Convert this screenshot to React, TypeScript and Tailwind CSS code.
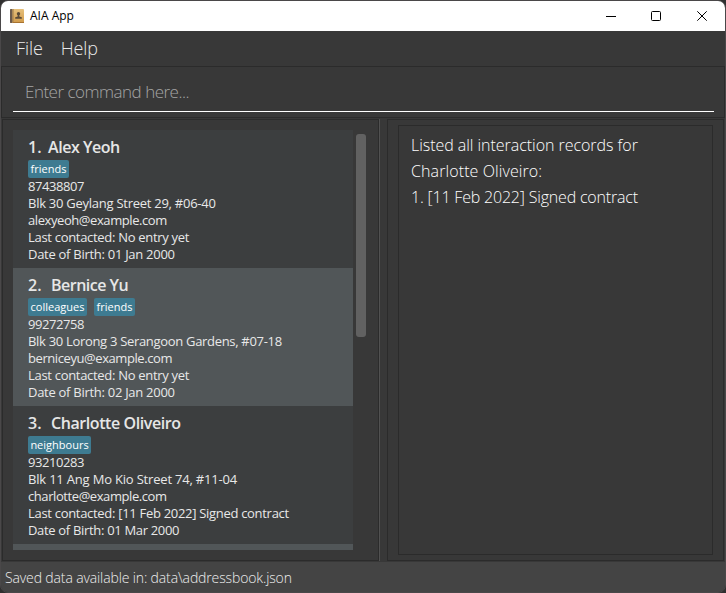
import React from "react";

type Line = { text: string; fit: string };
type Person = { index: string; indexFit: string; name: string; fit: string; tags: Line[]; lines: Line[] };

const people: Person[] = [
  {
    index: "1.",
    indexFit: "w-5",
    name: "Alex Yeoh",
    fit: "tracking-[-0.45px]",
    tags: [{ text: "friends", fit: "w-[41px]" }],
    lines: [
      { text: "87438807", fit: "tracking-[-0.45px]" },
      { text: "Blk 30 Geylang Street 29, #06-40", fit: "tracking-[-0.26px]" },
      { text: "alexyeoh@example.com", fit: "tracking-[-0.42px]" },
      { text: "Last contacted: No entry yet", fit: "tracking-[-0.3px]" },
      { text: "Date of Birth: 01 Jan 2000", fit: "tracking-[-0.28px]" },
    ],
  },
  {
    index: "2.",
    indexFit: "w-[23px]",
    name: "Bernice Yu",
    fit: "tracking-[-0.5px]",
    tags: [
      { text: "colleagues", fit: "w-[59px]" },
      { text: "friends", fit: "w-[41px]" },
    ],
    lines: [
      { text: "99272758", fit: "tracking-[-0.45px]" },
      { text: "Blk 30 Lorong 3 Serangoon Gardens, #07-18", fit: "tracking-[-0.31px]" },
      { text: "berniceyu@example.com", fit: "tracking-[-0.42px]" },
      { text: "Last contacted: No entry yet", fit: "tracking-[-0.3px]" },
      { text: "Date of Birth: 02 Jan 2000", fit: "tracking-[-0.28px]" },
    ],
  },
  {
    index: "3.",
    indexFit: "w-[23px]",
    name: "Charlotte Oliveiro",
    fit: "tracking-[-0.42px]",
    tags: [{ text: "neighbours", fit: "w-[63px]" }],
    lines: [
      { text: "93210283", fit: "tracking-[-0.45px]" },
      { text: "Blk 11 Ang Mo Kio Street 74, #11-04", fit: "tracking-[-0.19px]" },
      { text: "charlotte@example.com", fit: "tracking-[-0.42px]" },
      { text: "Last contacted: [11 Feb 2022] Signed contract", fit: "tracking-[-0.3px]" },
      { text: "Date of Birth: 01 Mar 2000", fit: "tracking-[-0.32px]" },
    ],
  },
];

function BookIcon() {
  return (
    <svg width="14" height="14" viewBox="0 0 14 14" className="shrink-0">
      <defs>
        <linearGradient id="cover" x1="0" y1="0" x2="0" y2="1">
          <stop offset="0" stopColor="#e6c07c" />
          <stop offset="1" stopColor="#d09a4a" />
        </linearGradient>
      </defs>
      <rect width="14" height="14" rx="1" fill="url(#cover)" />
      <rect width="2.500" height="14" rx="0.8" fill="#6b5a4c" />
      <rect x="2.500" width="1.200" height="14" fill="#b08a55" />
      <rect x="3" y="13" width="11" height="1" fill="#a87331" />
      <circle cx="8.500" cy="4.800" r="1.700" fill="#5a4a38" />
      <path d="M7.700 6h1.600v1.600l2.500.6V9.800H5.200V8.200l2.500-.6z" fill="#5a4a38" />
    </svg>
  );
}

function TitleBar() {
  return (
    <header className="flex h-[30px] shrink-0 items-center rounded-t-[7px] bg-white pl-[9px] pr-[17px] text-black">
      <BookIcon />
      <span className="ml-[6px] text-[12px] leading-4 tracking-[0px]">AIA App</span>
      <svg className="ml-auto" width="102" height="12" viewBox="0 0 102 12" fill="none" stroke="#000">
        <path d="M0 6.500h10" />
        <rect x="45.500" y="1.500" width="9" height="9" rx="1" />
        <path d="M91.300 1.300l9.400 9.400M100.700 1.300l-9.400 9.400" />
      </svg>
    </header>
  );
}

function PersonCard({ person, shaded }: { person: Person; shaded: boolean }) {
  return (
    <li className={`h-[138px] shrink-0 pl-[15px] pt-1.5 ${shaded ? "bg-[#515658]" : "bg-[#3c3e3f]"}`}>
      <div className="flex h-[22px] items-center text-[16px] font-semibold leading-[22px] text-[#e6e6e6]">
        <span className={person.indexFit}>{person.index}</span>
        <span className={`whitespace-nowrap ${person.fit}`}>{person.name}</span>
      </div>
      <div className="mt-0.5 flex h-[18px] gap-[7px]">
        {person.tags.map((tag) => (
          <span
            key={tag.text}
            className={`flex justify-center rounded-[2px] bg-[#3e7b91] text-[11px] leading-[18px] text-white ${tag.fit}`}
          >
            {tag.text}
          </span>
        ))}
      </div>
      {person.lines.map((line) => (
        <p key={line.text} className={`h-[17px] whitespace-nowrap text-[13px] leading-[17px] text-[#e8e8e8] ${line.fit}`}>
          {line.text}
        </p>
      ))}
    </li>
  );
}

export default function App() {
  return (
    <div className="h-[593px] w-[726px] overflow-hidden bg-[#303030] font-['Open_Sans','Noto_Sans',sans-serif]">
      <div className="flex h-full w-full flex-col rounded-[8px] border border-[#4a4849] bg-[#383838]">
        <TitleBar />
        <nav className="flex h-[35px] shrink-0 items-center gap-[18px] pl-[15px] text-[18px] font-light text-[#eaeaea]">
          <span className="tracking-[-0.1px]">File</span>
          <span className="tracking-[-0.1px]">Help</span>
        </nav>
        <section className="h-[52px] shrink-0 border border-[#2b2b2b] pl-[11px] pr-[10px]">
          <div className="flex h-[45px] items-center border-b border-white pl-3 pt-[5px] text-[17px] font-light text-[#a5a5a5]">
            <span className="tracking-[-0.5px]">Enter command here...</span>
          </div>
        </section>
        <main className="mt-px flex h-[442px] shrink-0 px-px">
          <section className="flex w-[377px] border border-[#2b2b2b] pl-[10px] pt-[10px]">
            <ul className="flex h-[420px] w-[340px] flex-col overflow-hidden">
              {people.map((p, i) => (
                <PersonCard key={p.name} person={p} shaded={i % 2 === 1} />
              ))}
              <li className="h-[6px] shrink-0 bg-[#515658]" />
            </ul>
            <div className="ml-[3px] mt-1 h-[203px] w-[10px] rounded-[3px] bg-[#616161]" />
          </section>
          <div className="w-[8px] border-l border-[#515151]" />
          <section className="w-[337px] border border-[#2b2b2b] pl-[10px] pt-[5px]">
            <div className="h-[430px] w-[315px] border border-[#2b2b2b] pl-3 pt-1.5 text-[16px] font-light leading-[26px] text-white">
              <p className="whitespace-nowrap tracking-[-0.04px]">Listed all interaction records for</p>
              <p className="whitespace-nowrap tracking-[0.1px]">Charlotte Oliveiro:</p>
              <p className="whitespace-nowrap tracking-[-0.19px]">1. [11 Feb 2022] Signed contract</p>
            </div>
          </section>
        </main>
        <footer className="mt-px flex grow items-center rounded-b-[7px] bg-[#444444] pl-1 text-[14px] font-light text-[#eeeeee]">
          <span className="tracking-[-0.13px]">Saved data available in: data\addressbook.json</span>
        </footer>
      </div>
    </div>
  );
}
